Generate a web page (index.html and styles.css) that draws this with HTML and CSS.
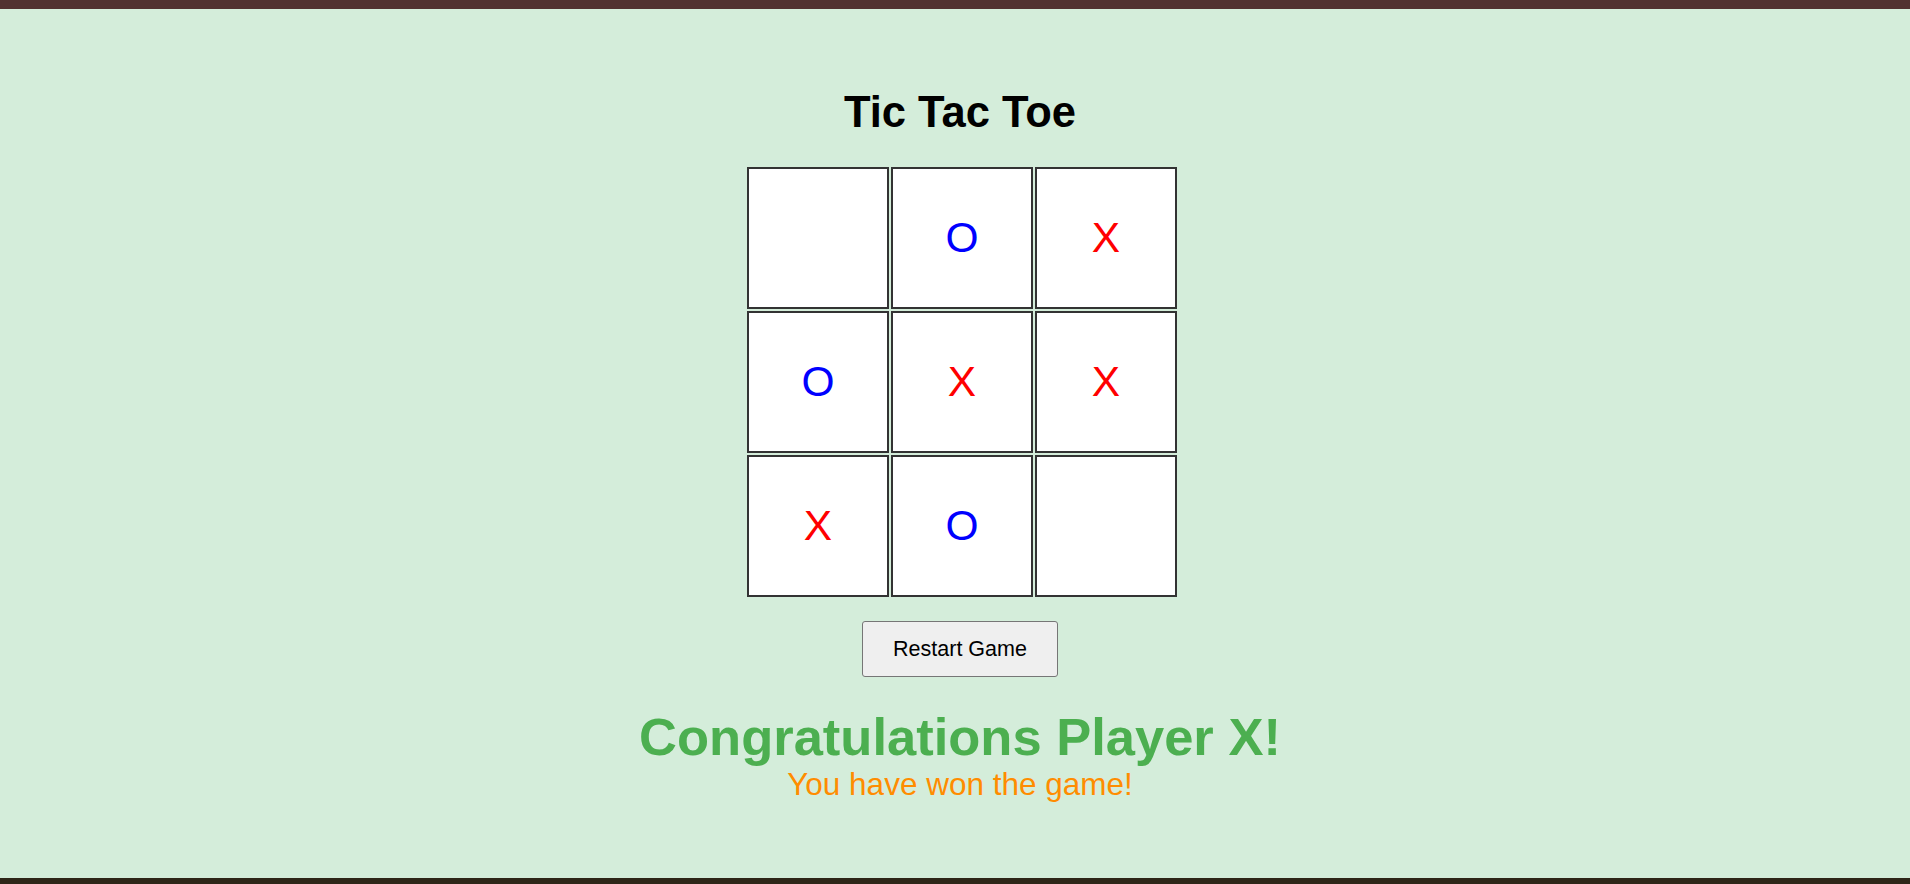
FILE: index.html
```html
<!DOCTYPE html>
<html lang="en">
<head>
<meta charset="utf-8">
<title>Tic Tac Toe</title>
<link rel="stylesheet" href="styles.css">
</head>
<body>
  <div class="top-bar"></div>
  <main class="game">
    <h1 class="title">Tic Tac Toe</h1>
    <div class="board">
      <div class="cell"></div>
      <div class="cell o">O</div>
      <div class="cell x">X</div>
      <div class="cell o">O</div>
      <div class="cell x">X</div>
      <div class="cell x">X</div>
      <div class="cell x">X</div>
      <div class="cell o">O</div>
      <div class="cell"></div>
    </div>
    <button class="restart" type="button">Restart Game</button>
    <div class="result">
      <h2 class="winner">Congratulations Player X!</h2>
      <p class="winner-sub">You have won the game!</p>
    </div>
  </main>
  <div class="bottom-bar"></div>
</body>
</html>
```

FILE: styles.css
```css
html, body {
  margin: 0;
  padding: 0;
  height: 100%;
}

body {
  display: flex;
  flex-direction: column;
  background: #d4edda;
  font-family: "Liberation Sans", Arial, sans-serif;
  color: #000;
  overflow: hidden;
}

.top-bar {
  height: 9px;
  background: #523230;
  flex: none;
}

.bottom-bar {
  height: 6px;
  background: #2e2618;
  flex: none;
}

.game {
  flex: 1;
  display: flex;
  flex-direction: column;
  align-items: center;
  padding: 78px 0 0 10px;
}

.title {
  margin: 0;
  font-size: 43.5px;
  line-height: 50px;
  font-weight: bold;
}

.board {
  margin-top: 30px;
  display: grid;
  grid-template-columns: repeat(3, 142px);
  grid-template-rows: repeat(3, 142px);
  gap: 2px;
  transform: translateX(2px);
}

.cell {
  box-sizing: border-box;
  background: #fff;
  border: 2px solid #333;
  display: flex;
  align-items: center;
  justify-content: center;
  font-size: 42.5px;
  line-height: 1;
}

.cell.x { color: #ff0000; }
.cell.o { color: #0000ff; }

.restart {
  margin-top: 24px;
  padding: 15px 30px;
  font-family: "Liberation Sans", Arial, sans-serif;
  font-size: 21.5px;
  line-height: 24px;
  color: #000;
  background: #efefef;
  border: 1px solid #767676;
  border-radius: 3px;
}

.result {
  margin-top: 30px;
  text-align: center;
}

.winner {
  margin: 0;
  font-size: 52.5px;
  line-height: 59px;
  font-weight: bold;
  color: #4caf50;
}

.winner-sub {
  margin: 0;
  font-size: 31.5px;
  line-height: 36px;
  color: #ff8c00;
}
```
